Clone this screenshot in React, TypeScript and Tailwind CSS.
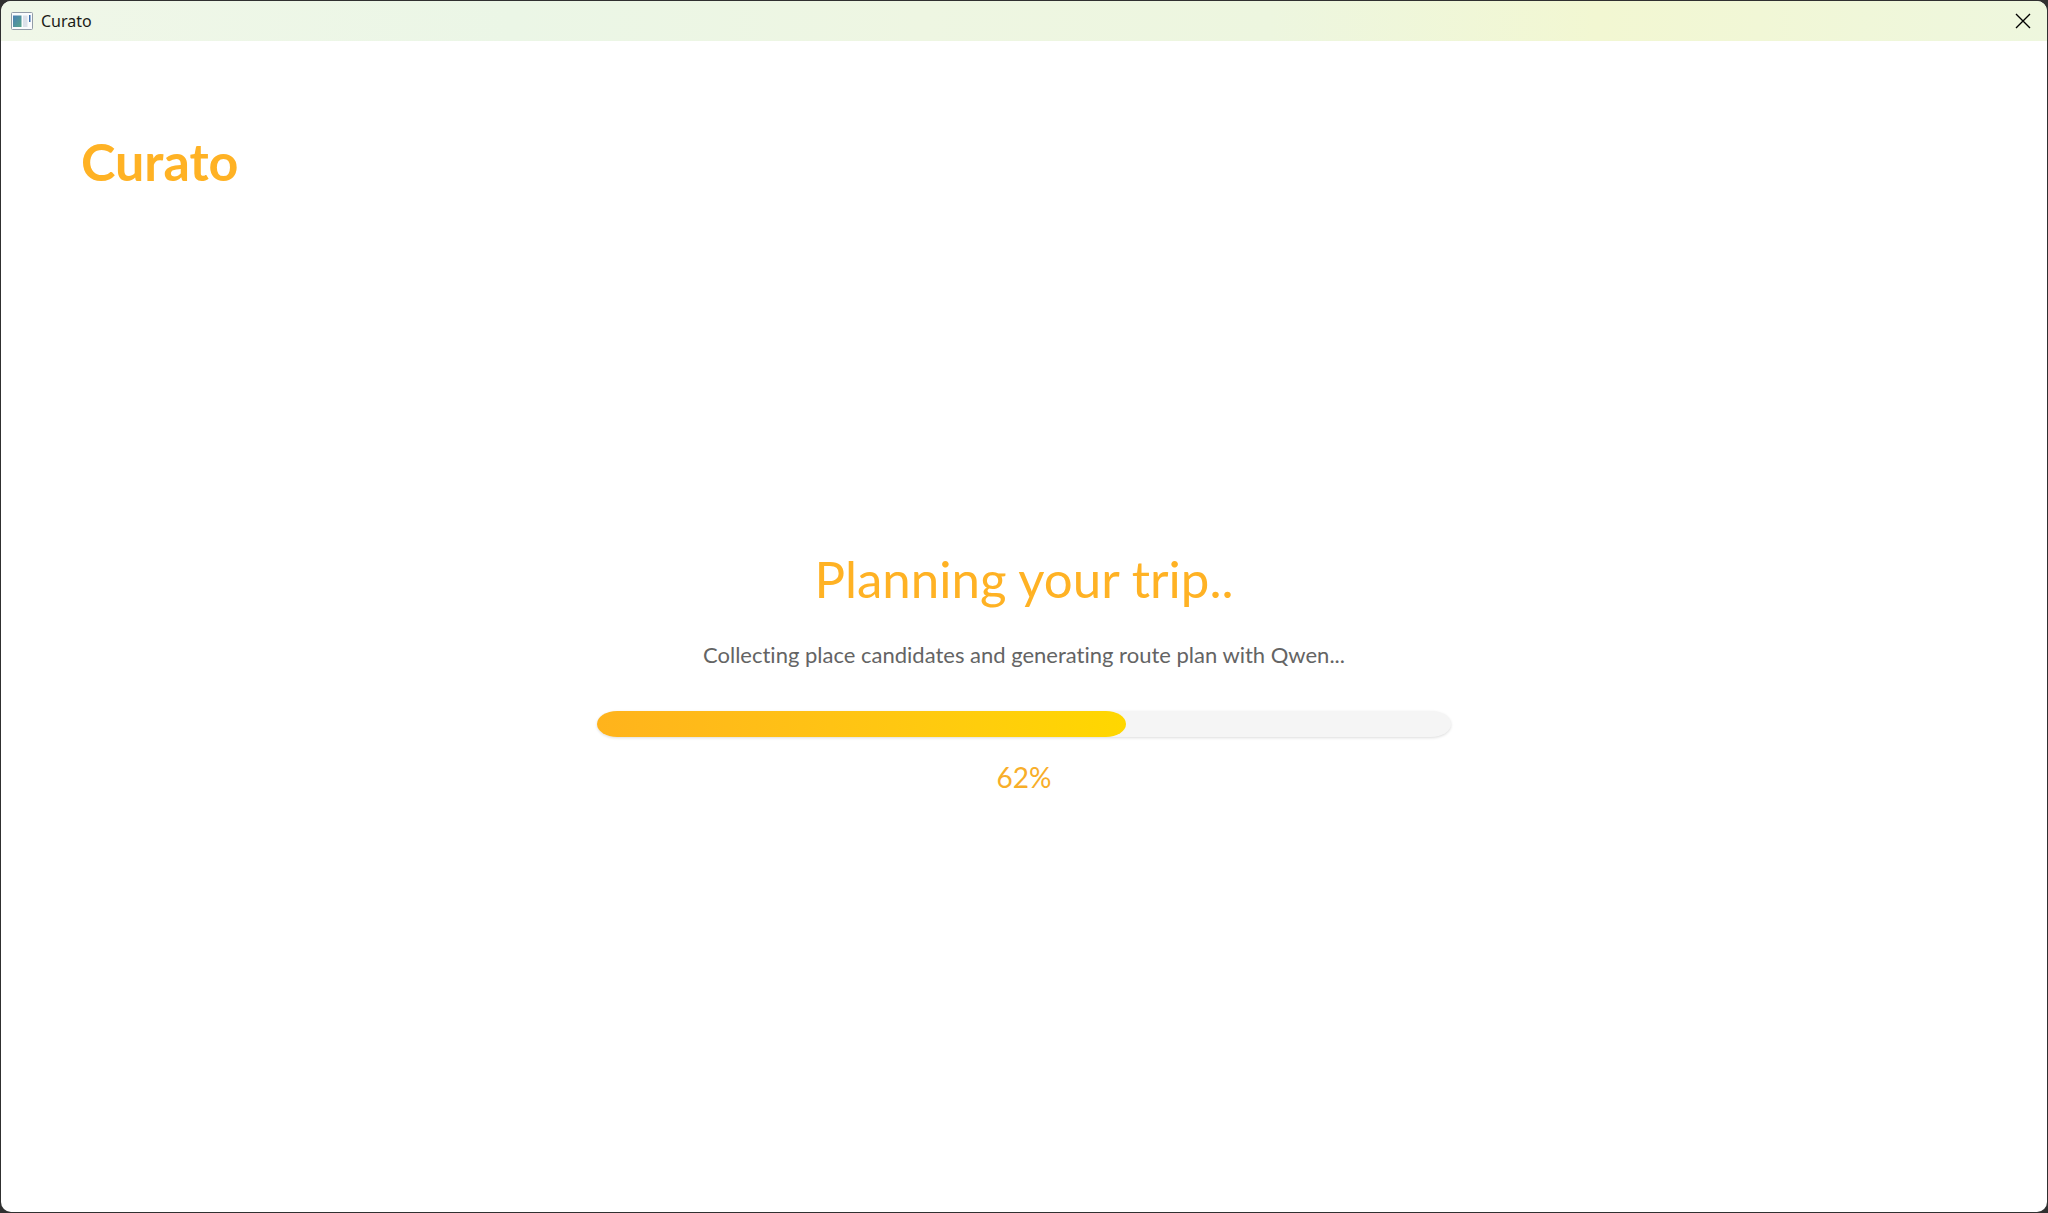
import { useId } from "react";

function AppIcon() {
  return (
    <svg viewBox="0 0 22 18" className="h-[18px] w-[22px]" aria-hidden="true">
      <defs>
        <linearGradient id="pane" x1="0" y1="0" x2="1" y2="1">
          <stop offset="0" stopColor="#4a7fb5" />
          <stop offset="1" stopColor="#57a58a" />
        </linearGradient>
      </defs>
      <rect x="0.5" y="0.5" width="21" height="17" rx="1" fill="#fbfcfe" stroke="#929ca8" />
      <rect x="2" y="3.5" width="8.5" height="11.5" fill="url(#pane)" />
      <rect x="12" y="3.5" width="4.5" height="11.5" fill="#dce1ea" />
      <rect x="18" y="3" width="1.5" height="7" fill="#3f6fae" />
    </svg>
  );
}

function TitleBar() {
  return (
    <header className="flex h-10 items-center justify-between bg-[linear-gradient(to_right,#f0f7e8_0%,#ebf6e6_25%,#eef6e2_45%,#edf6df_62%,#f2f7d2_78%,#f1f7d6_86%,#eef7de_100%)]">
      <div className="flex items-center gap-2 pl-2.5">
        <AppIcon />
        <span className="font-['Noto_Sans',sans-serif] text-base text-[#1b1c18]">Curato</span>
      </div>
      <button type="button" aria-label="Close" className="flex h-full w-12 items-center justify-center text-black">
        <svg viewBox="0 0 16 16" className="size-4" fill="none" stroke="currentColor" strokeWidth="1.4" aria-hidden="true">
          <path d="M1 1 15 15M15 1 1 15" />
        </svg>
      </button>
    </header>
  );
}

function Progress({ value, labelId }: { value: number; labelId: string }) {
  return (
    <div
      role="progressbar"
      aria-valuenow={value}
      aria-valuemin={0}
      aria-valuemax={100}
      aria-labelledby={labelId}
      className="w-full rounded-[20px/13px] bg-[#f5f5f5] shadow-[0_1px_3px_rgba(0,0,0,0.14)]"
    >
      <div
        className="h-[26px] rounded-[20px/13px] bg-linear-to-r from-[#ffb31c] to-[#ffd700]"
        style={{ width: `${value}%` }}
      />
    </div>
  );
}

export default function App() {
  const labelId = useId();
  const value = 62;
  return (
    <div className="flex min-h-screen flex-col bg-[#303030] p-px">
      <div className="flex flex-1 flex-col overflow-hidden rounded-[10px] bg-white font-['Lato',sans-serif] [font-variant-ligatures:none]">
        <TitleBar />
        <main className="flex flex-1 flex-col px-20 pt-[92px]">
          <div className="text-[52px] leading-14 font-bold text-[#ffb224]">Curato</div>
          <section className="mx-auto mt-[358px] flex w-full max-w-[854px] flex-col items-center">
            <h1 id={labelId} className="text-[51px] leading-16 text-[#ffb224]">Planning your trip..</h1>
            <p className="mt-7 mb-10 text-[22px] leading-8 text-[#646464]">
              Collecting place candidates and generating route plan with Qwen...
            </p>
            <Progress value={value} labelId={labelId} />
            <p className="mt-6 text-[28px] leading-8 text-[#f8ae29]">{value}%</p>
          </section>
        </main>
      </div>
    </div>
  );
}
